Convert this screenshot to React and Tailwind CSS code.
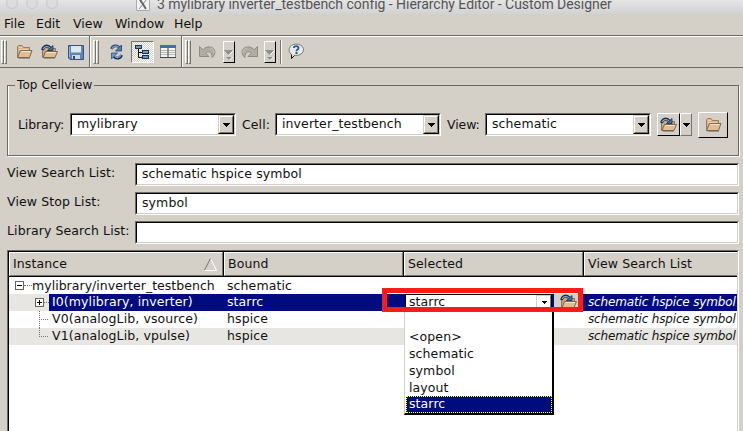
import React from "react";

const sunken =
  "border border-t-[#6f6c67] border-l-[#6f6c67] border-r-white border-b-white";
const sunkenInner =
  "border border-t-black border-l-black border-r-[#d4cfc7] border-b-[#d4cfc7]";
const raised =
  "border border-t-white border-l-white border-r-black border-b-black";

function Handle() {
  return (
    <div className="flex h-6 w-[6px] shrink-0">
      <span className="w-[3px] border border-t-white border-l-white border-r-[#77746f] border-b-[#77746f]" />
      <span className="w-[3px] border border-t-white border-l-white border-r-[#77746f] border-b-[#77746f]" />
    </div>
  );
}

function Divider() {
  return <div className="h-[31px] w-[2px] shrink-0 border-r border-l border-l-[#6b6965] border-r-white" />;
}

function Folder() {
  return (
    <svg width="17" height="16" viewBox="0 0 17 16" className="block shrink-0">
      <path d="M1.5 13.5V2.5L2.5 1.5H6L7.5 3.5H13.5V7" fill="#dcb286" stroke="#9a7c5c" />
      <path d="M3 3.5H6M3 5.5H12" stroke="#f0d3ad" />
      <path d="M1.5 13.5L4.5 6.5H16L13.5 13.5Z" fill="#e2bd8f" stroke="#75695c" />
      <path d="M5.2 7.5H14.5" stroke="#f8e4c6" />
      <path d="M2.5 14.5H14" stroke="#9a958c" />
    </svg>
  );
}

function FolderArrow() {
  return (
    <svg width="18" height="16" viewBox="0 0 18 16" className="block shrink-0">
      <path d="M1.5 13.5V3.5H6L7.5 4.5H14.5V7" fill="#cfa679" stroke="#8c7558" />
      <path d="M2 13.5L4.5 7.5H16.5L14 13.5Z" fill="#e2bd8f" stroke="#75695c" />
      <path d="M5.500 8.500H15" stroke="#f8e4c6" />
      <path d="M1.500 6C2.500 1.500 7 .8 9.500 4" fill="none" stroke="#172f52" strokeWidth="2.800" />
      <path d="M2 5C3.800 2 7 1.800 9 4" fill="none" stroke="#8bb0da" strokeWidth="1.100" />
      <path d="M6.500 6.500H12V1.500Z" fill="#4672a6" stroke="#172f52" strokeWidth=".8" />
      <path d="M3 14.5H14" stroke="#9a958c" />
    </svg>
  );
}

function Save() {
  return (
    <svg width="16" height="16" viewBox="0 0 16 16" className="block shrink-0">
      <path d="M.5 1.5H15.5V15.5H2L.5 14Z" fill="#5f86b5" stroke="#34547f" />
      <path d="M3 2H13V8.500H3Z" fill="#dfe7ec" />
      <path d="M3 8.500H13" stroke="#9fb5c8" />
      <path d="M4 11H12V15H4Z" fill="#d5d8d8" />
      <path d="M5 12H7V15H5Z" fill="#2d4b70" />
      <path d="M1.5 3V13" stroke="#8fb3dd" />
    </svg>
  );
}

function Refresh() {
  return (
    <svg width="13" height="16" viewBox="0 0 13 16" className="block shrink-0">
      <path d="M1.5 5C2.5 1.5 7 .8 9 3.5" fill="none" stroke="#2c4f80" strokeWidth="2.800" />
      <path d="M2 4.5C3.5 1.8 6.5 1.6 8.5 3.5" fill="none" stroke="#7faae0" strokeWidth="1.200" />
      <path d="M11.500 1V7H5.500Z" fill="#5182bf" stroke="#142b4d" strokeWidth=".7" />
      <path d="M11.5 11C10.5 14.5 6 15.2 4 12.5" fill="none" stroke="#142b4d" strokeWidth="2.800" />
      <path d="M11 11.3C9.5 14 6.5 14.2 4.5 12.3" fill="none" stroke="#7faae0" strokeWidth="1.200" />
      <path d="M1.500 15V9H7.500Z" fill="#6a9ad6" stroke="#1e3d6b" strokeWidth=".7" />
    </svg>
  );
}

function Tree() {
  return (
    <svg width="17" height="16" viewBox="0 0 17 16" className="block shrink-0">
      <path d="M4.5 4V13.5H9M4.5 8.5H9" fill="none" stroke="#111" />
      <g fill="#6f96c8" stroke="#1c3355">
        <rect x="1.5" y="1.5" width="6" height="3" />
        <rect x="8.5" y="6.5" width="6" height="3" />
        <rect x="8.5" y="11.5" width="6" height="3" />
      </g>
    </svg>
  );
}

function TableIcon() {
  return (
    <svg width="16" height="14" viewBox="0 0 16 14" className="block shrink-0">
      <rect x=".5" y=".5" width="15" height="12" fill="#f4f4f0" stroke="#85888a" />
      <path d="M0 0H16V3H0Z" fill="#46709f" />
      <path d="M1 5.5H15M1 7.5H15M1 9.5H15" stroke="#b6b5b0" />
      <path d="M8 3V13" stroke="#44484d" />
      <path d="M0 12.5H16" stroke="#44484d" />
    </svg>
  );
}

function Undo({ flip }) {
  return (
    <svg width="17" height="14" viewBox="0 0 17 14" className={flip ? "block shrink-0 -scale-x-100" : "block shrink-0"}>
      <path d="M.5 1.5V11.5H10L6.8 8.3C9 5.5 13 6.5 13.2 12.5C18 8 16 2.500 11 2C8 1.700 5.500 2.800 3.800 4.800Z" fill="#b0ada5" stroke="#8e8b84" />
      <path d="M11 2.900C13.500 3.300 15 5 15 8" fill="none" stroke="#c6c3bb" />
    </svg>
  );
}

function MoreButton() {
  return (
    <div className={"h-[22px] w-3 shrink-0 " + raised}>
      <svg width="10" height="20" viewBox="0 0 10 20" className="block">
        <path d="M0 8H9L4.500 13Z" fill="#8f8f92" />
        <path d="M5 13L9.500 8.500" stroke="white" />
        <path d="M2 15H8L5 18Z" fill="#8f8f92" />
        <path d="M5.500 18L8.500 15" stroke="white" />
      </svg>
    </div>
  );
}

function Help() {
  return (
    <svg width="17" height="17" viewBox="0 0 17 17" className="block shrink-0">
      <path d="M3.500 11.500C-1 8 1 1.500 8 1C16 1 18 9 12 11.500C10 12.500 8 12.500 6.500 12.300L3.500 15.500Z" fill="#e9ebeb" stroke="#77797a" />
      <path d="M3.500 11.500V15.500L6.500 12.500" fill="none" stroke="#111" />
      <path d="M5.800 5C6 2.500 11 2.600 10.500 5.200C10.200 6.500 8.400 6.500 8.400 8.200" fill="none" stroke="#2b5590" strokeWidth="1.800" />
      <rect x="7.500" y="9" width="2" height="2" fill="#2b5590" />
    </svg>
  );
}

function DownArrow() {
  return (
    <svg width="8" height="4" viewBox="0 0 8 4" shapeRendering="crispEdges" className="block shrink-0">
      <path d="M0 0H8L4 4Z" fill="black" />
    </svg>
  );
}

function Combo({ label, value, labelClass }) {
  return (
    <>
      <span className={"shrink-0 leading-[18px] " + labelClass}>{label}</span>
      <div className={"flex h-[23px] w-[166px] shrink-0 " + sunken}>
        <div className={"flex flex-1 bg-white " + sunkenInner}>
          <span className="flex-1 pl-[5px] leading-[17px]">{value}</span>
          <div className="w-4 border border-t-[#d4cfc7] border-l-[#d4cfc7] border-r-black border-b-black bg-[#d4cfc7]">
            <div className="flex h-full items-center justify-center border border-t-white border-l-white border-r-[#77746f] border-b-[#77746f]">
              <DownArrow />
            </div>
          </div>
        </div>
      </div>
    </>
  );
}

function Field({ label, value }) {
  return (
    <div className="flex h-[23px]">
      <span className="w-32 shrink-0 leading-[20px]">{label}</span>
      <div className={"flex flex-1 " + sunken}>
        <div className={"flex-1 bg-white pl-[5px] leading-[17px] " + sunkenInner}>{value}</div>
      </div>
    </div>
  );
}

function HeaderCell({ children, className }) {
  return (
    <div className={"flex h-[25px] shrink-0 border-r border-b border-black " + className}>
      <div className="flex flex-1 items-center justify-between border border-t-white border-l-white border-r-[#77746f] border-b-[#77746f] pl-[3px]">
        {children}
      </div>
    </div>
  );
}

function Expander({ open }) {
  return (
    <svg width="9" height="9" viewBox="0 0 9 9" shapeRendering="crispEdges" className="block shrink-0">
      <rect x=".5" y=".5" width="8" height="8" fill="white" stroke="#66635f" />
      <path d={open ? "M2 4.500H7" : "M2 4.500H7M4.500 2V7"} stroke="black" />
    </svg>
  );
}

function TreeLines({ last }) {
  return (
    <svg width="11" height="17" viewBox="0 0 11 17" shapeRendering="crispEdges" className="ml-[30px] block shrink-0">
      <path d={last ? "M.5 0V9M0 8.500H10" : "M.5 0V17M0 8.500H10"} stroke="#77746f" strokeDasharray="1 1" />
    </svg>
  );
}

function SearchList() {
  return <span className="shrink-0 text-[12px] tracking-[-0.16px] italic">schematic hspice symbol</span>;
}

const options = ["", "<open>", "schematic", "symbol", "layout"];

export default function App() {
  return (
    <div className="relative flex h-[431px] w-[743px] flex-col overflow-hidden bg-[#d4cfc7] text-[12.5px] tracking-[0.1px] whitespace-pre text-[#111] [font-family:'DejaVu_Sans',sans-serif]">
      <div className="flex h-[14px] shrink-0 bg-linear-to-b from-[#e4e4e4] to-[#d2d2d2] pl-1.5">
        <div className="-mt-[3px] flex gap-2">
          <span className="size-3 rounded-full border border-[#c8c8c8] bg-[#dcdcdc]" />
          <span className="size-3 rounded-full border border-[#c8c8c8] bg-[#dcdcdc]" />
          <span className="size-3 rounded-full border border-[#c8c8c8] bg-[#dcdcdc]" />
        </div>
        <svg width="14" height="12" viewBox="0 0 14 12" className="ml-[78px] block shrink-0">
          <path d="M0 0H14V11H0Z" fill="#f2f2f2" />
          <path d="M.5 0V10.500H13.500V0" fill="none" stroke="#aaa" />
          <path d="M11 -1L3 9" stroke="#888" />
          <path d="M3 -2L10 9" stroke="#666" strokeWidth="2" />
        </svg>
        <span className="-mt-[5px] ml-[7px] text-[14px] leading-[18px] tracking-[-0.04px] text-[#555] [font-family:Roboto,sans-serif]">3 mylibrary inverter_testbench config - Hierarchy Editor - Custom Designer</span>
      </div>

      <div className="flex h-[21px] shrink-0 pl-1 leading-[19px] tracking-normal">
        <span className="w-8">File</span>
        <span className="w-[37px]">Edit</span>
        <span className="w-[42px]">View</span>
        <span className="w-[59px]">Window</span>
        <span>Help</span>
      </div>

      <div className="flex h-[33px] shrink-0 items-center border-t border-b border-[#6b6965] pl-px shadow-[inset_0_1px_0_white]">
        <Handle />
        <div className="ml-[9px] flex w-[73px] items-center"><Folder /><span className="w-2" /><FolderArrow /><span className="w-[9px]" /><Save /></div>
        <Divider />
        <div className="ml-[2px] flex w-[88px] items-center">
          <Handle />
          <span className="w-[11px]" />
          <Refresh />
          <div className="ml-[8px] flex h-[22px] w-[23px] shrink-0 items-center justify-center border border-t-[#77746f] border-l-[#77746f] border-r-white border-b-white bg-[conic-gradient(#d4cfc7_25%,#fff_0_50%,#d4cfc7_0_75%,#fff_0)] bg-size-[2px_2px]"><Tree /></div>
          <span className="w-1.5 shrink-0" />
          <TableIcon />
        </div>
        <Divider />
        <div className="ml-[2px] flex items-center">
          <Handle />
          <span className="w-[8px]" />
          <Undo />
          <span className="w-[7px]" />
          <MoreButton />
          <span className="w-[6px]" />
          <Undo flip />
          <span className="w-[6px]" />
          <MoreButton />
          <span className="ml-1 h-6 w-[2px] border-r border-l border-l-[#77746f] border-r-white" />
          <span className="w-1.5" />
          <Help />
        </div>
      </div>

      <fieldset className="mt-[9px] ml-[7px] h-[79px] w-[732px] shrink-0 border border-[#6b6965] shadow-[inset_1px_0_0_white,1px_1px_0_white]">
        <legend className="ml-[7px] h-4 px-[2px] text-[12px] leading-4">Top Cellview</legend>
        <div className="flex h-[63px] items-center pl-2.5">
          <Combo label="Library:" value="mylibrary" labelClass="w-[52px] tracking-[-0.1px]" />
          <Combo label="Cell:" value="inverter_testbench" labelClass="ml-1.5 w-[33px]" />
          <Combo label="View:" value="schematic" labelClass="ml-1.5 w-[38px] tracking-[-0.1px]" />
          <div className={"ml-1.5 flex h-[23px] w-[23px] shrink-0 items-center justify-center " + raised}><FolderArrow /></div>
          <div className="flex h-[23px] w-3 items-center justify-center border border-t-white border-l-white border-r-[#77746f] border-b-[#77746f]"><DownArrow /></div>
          <div className={"ml-1.5 flex h-[26px] w-[30px] items-center justify-center " + raised}><Folder /></div>
        </div>
      </fieldset>

      <div className="mt-[7px] ml-[7px] flex w-[732px] shrink-0 flex-col gap-1.5">
        <Field label="View Search List:" value="schematic hspice symbol" />
        <Field label="View Stop List:" value="symbol" />
        <Field label="Library Search List:" value="" />
      </div>

      <div className="mt-[6px] ml-[7px] flex h-[190px] w-[732px] shrink-0 flex-col border-t border-l border-r border-t-[#6b6965] border-l-[#6b6965] border-r-white">
        <div className="flex flex-1 flex-col overflow-hidden border-t border-l border-r border-t-black border-l-black border-r-[#d4cfc7] bg-white">
          <div className="flex shrink-0 bg-[#d4cfc7]">
            <HeaderCell className="w-[215px]">
              Instance
              <svg width="14" height="13" viewBox="0 0 14 13" className="mr-[4px]">
                <path d="M6.500 .5L12.500 12.500H.5" fill="none" stroke="white" />
                <path d="M6.500 .5L.5 12" stroke="#77746f" />
              </svg>
            </HeaderCell>
            <HeaderCell className="w-[180px]">Bound</HeaderCell>
            <HeaderCell className="w-[180px]">Selected</HeaderCell>
            <HeaderCell className="w-[160px]">View Search List</HeaderCell>
          </div>
          <div className="flex h-[17px] shrink-0 items-center leading-[17px]">
            <div className="flex w-[218px] items-center pl-1.5">
              <Expander open />
              <span className="w-2 shrink-0 border-t border-dotted border-[#77746f]" />
              <span className="tracking-[0.03px]">mylibrary/inverter_testbench</span>
            </div>
            <span>schematic</span>
          </div>
          <div className="flex h-[17px] shrink-0 bg-[#000b80] leading-[16px] text-white">
            <div className="flex w-[40px] shrink-0 items-center bg-[#e8e6e2] pl-[26px]">
              <Expander />
              <span className="flex-1 border-t border-dotted border-[#77746f]" />
            </div>
            <span className="w-[178px] shrink-0 pl-[3px]">I0(mylibrary, inverter)</span>
            <span className="w-[178px] shrink-0">starrc</span>
            <div className="flex h-[17px] w-[147px] shrink-0 border border-black bg-white pl-[3px] text-[#111]">
              <span className="flex-1 leading-[13px]">starrc</span>
              <div className="flex h-[15px] w-[15px] items-center justify-center border border-t-[#d4cfc7] border-l-[#d4cfc7] border-r-[#77746f] border-b-[#77746f]">
                <svg width="6" height="3" viewBox="0 0 6 3" shapeRendering="crispEdges"><path d="M0 0H6L3 3Z" /></svg>
              </div>
            </div>
            <div className="ml-[2px] flex h-[17px] w-[29px] shrink-0 items-start justify-center overflow-hidden bg-[#d4cfc7]"><FolderArrow /></div>
            <span className="w-[5px] shrink-0" />
            <SearchList />
          </div>
          <div className="flex h-[17px] shrink-0 leading-[16px]">
            <TreeLines />
            <span className="w-[177px] shrink-0 pl-[2px]">V0(analogLib, vsource)</span>
            <span className="w-[361px] shrink-0">hspice</span>
            <SearchList />
          </div>
          <div className="flex h-[17px] shrink-0 bg-[#e8e6e2] leading-[16px]">
            <TreeLines last />
            <span className="w-[177px] shrink-0 pl-[2px]">V1(analogLib, vpulse)</span>
            <span className="w-[361px] shrink-0">hspice</span>
            <SearchList />
          </div>
        </div>
      </div>

      <div className="absolute top-[311px] left-[404px] w-[150px] border-r-2 border-b-2 border-l border-black border-l-[#d4cfc7] bg-white pl-px">
        {options.map((text, i) => (
          <div key={i} className="h-[17px] pl-[3px] leading-[17px]">{text}</div>
        ))}
        <div className="h-[17px] border border-dotted border-[#ffff80] bg-[#000b80] pl-[2px] leading-[14px] text-white">starrc</div>
      </div>
      <div className="absolute top-[288px] left-[382px] h-6 w-[201px] border-[5px] border-[#ff1c16]" />
    </div>
  );
}
